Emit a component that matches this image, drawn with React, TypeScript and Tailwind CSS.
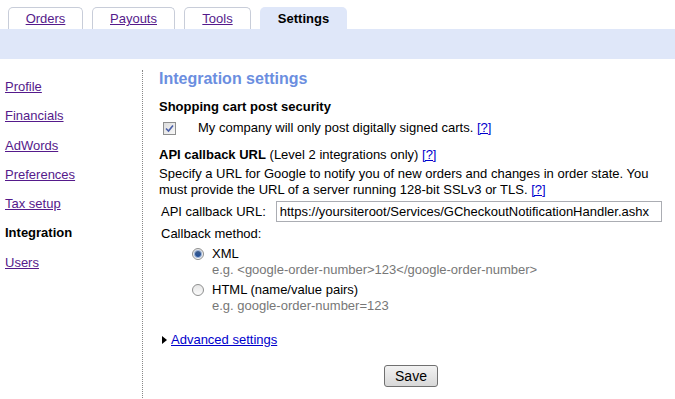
import React from "react";

const tabs = [
	{ label: "Orders", w: "w-[75px]" },
	{ label: "Payouts", w: "w-[83px]" },
	{ label: "Tools", w: "w-[67px]" },
];

const navItems = ["Profile", "Financials", "AdWords", "Preferences", "Tax setup", "Integration", "Users"];

function Help() {
	return <a className="text-[#0000cc] underline cursor-pointer">[?]</a>;
}

function Radio({ checked }: { checked?: boolean }) {
	return (
		<span className="w-[12px] h-[12px] rounded-full border border-[#8e8f8f] bg-gradient-to-b from-[#e6e6e6] to-[#fbfbfb] flex items-center justify-center shrink-0">
			{checked && <span className="w-[6px] h-[6px] rounded-full bg-gradient-to-b from-[#3d5c8a] to-[#1f4e9a] ring-1 ring-[#9bb3d8]" />}
		</span>
	);
}

export default function App() {
	return (
		<div className="w-[675px] h-[399px] bg-white overflow-hidden font-['Liberation_Sans',Arial,sans-serif] text-[13px] leading-[16px] text-black">
			{/* tabs */}
			<div className="flex items-end pl-[8px] pt-[7px] gap-[9px]">
				{tabs.map((t) => (
					<div
						key={t.label}
						className={`${t.w} h-[22px] pt-[1px] border border-b-0 border-[#c8cdd9] rounded-t-[5px] bg-white flex items-center justify-center`}>
						<a className="text-[#551a8b] underline cursor-pointer">{t.label}</a>
					</div>
				))}
				<div className="w-[87px] h-[22px] pt-[1px] rounded-t-[5px] bg-[#dfe7f9] flex items-center justify-center font-bold">
					Settings
				</div>
			</div>
			<div className="h-[30px] bg-[#dfe7f9]" />

			<div className="flex items-start">
				{/* left nav */}
				<div className="w-[143px] shrink-0 mt-[11px] pt-[9px] pl-[5px] h-[340px] border-r border-dotted border-[#888] flex flex-col gap-[13.3px]">
					{navItems.map((n) =>
						n === "Integration" ? (
							<span key={n} className="font-bold">
								{n}
							</span>
						) : (
							<a key={n} className="text-[#551a8b] underline cursor-pointer self-start">
								{n}
							</a>
						)
					)}
				</div>

				{/* main */}
				<div className="pl-[16px] pt-[10px] flex-1">
					<h1 className="text-[16px] leading-[20px] font-bold text-[#6b8ee0]">Integration settings</h1>

					<p className="font-bold mt-[10px]">Shopping cart post security</p>
					<div className="flex items-center mt-[5px]">
						<span className="ml-[4px] w-[13px] h-[13px] border border-[#8e8f8f] bg-gradient-to-br from-[#dcdcdc] to-[#f8f8f8] flex items-center justify-center">
							<svg width="9" height="9" viewBox="0 0 9 9">
								<path d="M1 4.5 L3.5 7 L8 1.5" fill="none" stroke="#4a5fa8" strokeWidth="1.6" />
							</svg>
						</span>
						<span className="ml-[22px]">
							My company will only post digitally signed carts. <Help />
						</span>
					</div>

					<p className="mt-[11px]">
						<span className="font-bold">API callback URL</span> (Level 2 integrations only) <Help />
					</p>
					<p className="mt-[3px]">
						Specify a URL for Google to notify you of new orders and changes in order state. You
						<br />
						must provide the URL of a server running 128-bit SSLv3 or TLS. <Help />
					</p>

					<div className="flex items-center mt-[3px] ml-[2px]">
						<span>API callback URL:</span>
						<div className="ml-[10px] w-[386px] h-[21px] border border-[#abadb3] pl-[3px] flex items-center overflow-hidden whitespace-nowrap">
							https://yoursiteroot/Services/GCheckoutNotificationHandler.ashx
						</div>
					</div>

					<p className="mt-[4px] ml-[2px]">Callback method:</p>
					<div className="ml-[33px] mt-[4px]">
						<div className="flex items-center gap-[8px]">
							<Radio checked />
							<span>XML</span>
						</div>
						<p className="ml-[20px] text-[#777]">e.g. &lt;google-order-number&gt;123&lt;/google-order-number&gt;</p>
						<div className="flex items-center gap-[8px] mt-[4px]">
							<Radio />
							<span>HTML (name/value pairs)</span>
						</div>
						<p className="ml-[20px] text-[#777]">e.g. google-order-number=123</p>
					</div>

					<div className="flex items-center mt-[18px] ml-[3px]">
						<svg width="5" height="8" viewBox="0 0 5 8" className="mr-[4px]">
							<path d="M0 0 L5 4 L0 8 Z" fill="#000" />
						</svg>
						<a className="text-[#0000cc] underline cursor-pointer">Advanced settings</a>
					</div>

					<button className="mt-[17px] ml-[225px] w-[54px] h-[22px] border border-[#707070] rounded-[3px] bg-gradient-to-b from-[#f2f2f2] to-[#d8d8d8] text-[14px] leading-[16px]">
						Save
					</button>
				</div>
			</div>
		</div>
	);
}
